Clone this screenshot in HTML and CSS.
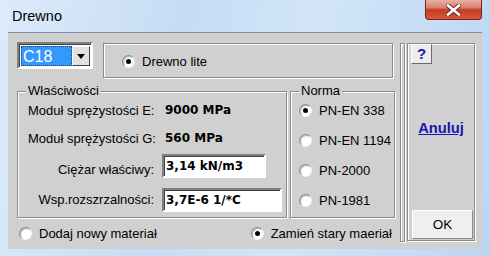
FILE: index.html
```html
<!DOCTYPE html>
<html lang="pl">
<head>
  <meta charset="UTF-8">
  <title>Drewno</title>
  <link rel="stylesheet" href="styles.css">
</head>
<body>

<div class="window">
  <div class="titlebar">
    <span class="title">Drewno</span>
    <div class="close">
      <svg width="15" height="12" viewBox="0 0 15 12">
        <path d="M2 1.5 L13 10.5 M13 1.5 L2 10.5" stroke="#6b1f14" stroke-width="4.4" stroke-linecap="square"/>
        <path d="M2 1.5 L13 10.5 M13 1.5 L2 10.5" stroke="#fff" stroke-width="2.6" stroke-linecap="square"/>
      </svg>
    </div>
  </div>

  <div class="client">
    <div class="main">
      <div class="top-row">
        <div class="combo">
          <div class="combo-value">C18</div>
          <div class="combo-btn"><span class="arrow"></span></div>
        </div>
        <div class="etched type-box">
          <label class="option"><span class="radio on"></span>Drewno lite</label>
        </div>
      </div>

      <div class="groups">
        <div class="etched group props">
          <span class="legend">Właściwości</span>
          <div class="prop-grid">
            <span class="prop-label">Moduł sprężystości E:</span>
            <span class="prop-value">9000 MPa</span>
            <span class="prop-label">Moduł sprężystości G:</span>
            <span class="prop-value">560 MPa</span>
            <span class="prop-label right">Ciężar właściwy:</span>
            <div class="field short">3,14 kN/m3</div>
            <span class="prop-label right">Wsp.rozszrzalności:</span>
            <div class="field long">3,7E-6 1/*C</div>
          </div>
        </div>

        <div class="etched group norma">
          <span class="legend">Norma</span>
          <label class="option"><span class="radio on"></span>PN-EN 338</label>
          <label class="option"><span class="radio"></span>PN-EN 1194</label>
          <label class="option"><span class="radio"></span>PN-2000</label>
          <label class="option"><span class="radio"></span>PN-1981</label>
        </div>
      </div>

      <div class="bottom-row">
        <label class="option"><span class="radio"></span>Dodaj nowy materiał</label>
        <label class="option replace"><span class="radio on"></span>Zamień stary maeriał</label>
      </div>
    </div>

    <div class="etched separator"></div>

    <div class="etched side">
      <div class="help-btn">?</div>
      <a class="cancel" href="#">Anuluj</a>
      <div class="ok-btn">OK</div>
    </div>
  </div>
</div>

</body>
</html>
```

FILE: styles.css
```css
body {
  margin: 0;
  padding: 0;
  font-family: 'Liberation Sans', Arial, sans-serif;
  font-size: 13px;
  color: #000;
}

.window {
  width: 490px;
  height: 256px;
  display: flex;
  flex-direction: column;
  background: linear-gradient(100deg, #dcebfa 0, #c6dcf4 35%, #d2e5f9 60%, #bcd6f1 100%);
  overflow: hidden;
}

.titlebar {
  height: 32px;
  display: flex;
  align-items: flex-start;
  padding: 0 8px 0 12px;
  flex: none;
}

.title {
  font-size: 14.5px;
  line-height: 32px;
}

.close {
  margin-left: auto;
  width: 57px;
  height: 20px;
  box-sizing: border-box;
  border: 1px solid #7a2216;
  border-top: none;
  border-radius: 0 0 4px 4px;
  background: linear-gradient(#eab0a4, #d98070 40%, #c63c22 52%, #d45a3c 100%);
  display: flex;
  align-items: center;
  justify-content: center;
}

.client {
  flex: 1;
  margin: 0 8px 7px;
  background: #d0d0d0;
  border-top: 1px solid #7d8ea3;
  display: flex;
  align-items: flex-start;
  padding: 9px 7px 0 9px;
}

/* etched (3D) frame like the old Win32 group boxes */
.etched {
  box-sizing: border-box;
  border: 1px solid #8a8a8a;
  box-shadow: inset 1px 1px #fff, 1px 1px #fff;
}

.main {
  width: 378px;
  display: flex;
  flex-direction: column;
}

.top-row {
  display: flex;
  align-items: flex-start;
  height: 36px;
}

.combo {
  width: 76px;
  height: 27px;
  box-sizing: border-box;
  border: 2px solid;
  border-color: #808080 #fff #fff #808080;
  box-shadow: inset 1px 1px #404040;
  background: #fff;
  display: flex;
  padding: 2px 1px 1px 2px;
}

.combo-value {
  flex: 1;
  background: #3399ff;
  color: #fff;
  font-size: 16px;
  line-height: 19px;
  padding-left: 1px;
  border: 1px dotted #1b3a66;
}

.combo-btn {
  width: 18px;
  box-sizing: border-box;
  border: 1px solid;
  border-color: #fff #404040 #404040 #fff;
  background: #e2e2e2;
  display: flex;
  align-items: center;
  justify-content: center;
}

.arrow {
  width: 0;
  height: 0;
  border-left: 4px solid transparent;
  border-right: 4px solid transparent;
  border-top: 5px solid #000;
}

.type-box {
  width: 290px;
  height: 35px;
  margin: 1px 0 0 10px;
  display: flex;
  align-items: center;
  padding: 2px 0 0 18px;
}

.option {
  display: flex;
  align-items: center;
  gap: 7px;
  white-space: nowrap;
}

.radio {
  width: 13px;
  height: 13px;
  box-sizing: border-box;
  border-radius: 50%;
  background: #fff;
  border: 1px solid;
  border-color: #8c8c8c #f4f4f4 #f4f4f4 #8c8c8c;
  box-shadow: inset 1px 1px 1px rgba(0, 0, 0, 0.3);
  display: flex;
  align-items: center;
  justify-content: center;
  flex: none;
}

.radio.on::after {
  content: '';
  width: 5px;
  height: 5px;
  border-radius: 50%;
  background: #000;
}

.groups {
  display: flex;
  margin-top: 13px;
  gap: 3px;
}

.group {
  position: relative;
  height: 127px;
}

.legend {
  position: absolute;
  top: -9px;
  left: 8px;
  padding: 0 2px;
  background: #d0d0d0;
  line-height: 16px;
}

.props {
  width: 270px;
  padding: 7px 0 0 10px;
}

.prop-grid {
  display: grid;
  grid-template-columns: 126px auto;
  grid-template-rows: 22px 22px 24px 24px;
  row-gap: 6px;
  column-gap: 8px;
  align-items: center;
}

.prop-grid .field.short {
  margin-top: -2px;
}

.prop-grid .field.long {
  margin-top: 5px;
}

.prop-label {
  white-space: nowrap;
  padding-top: 1px;
}

.prop-label.right {
  text-align: right;
  padding-top: 4px;
}

.prop-value,
.field {
  font-family: 'DejaVu Sans', sans-serif;
  font-weight: bold;
  font-size: 12px;
  white-space: nowrap;
}

.prop-value {
  padding-left: 3px;
}

.field {
  height: 24px;
  box-sizing: border-box;
  border: 2px solid;
  border-color: #808080 #fff #fff #808080;
  box-shadow: inset 1px 1px #404040;
  background: #fff;
  padding: 0 0 0 2px;
  line-height: 20px;
}

.field.short {
  width: 104px;
}

.field.long {
  width: 120px;
}

.norma {
  width: 105px;
  padding: 3px 0 0 8px;
  display: flex;
  flex-direction: column;
}

.norma .option {
  height: 30px;
}

.bottom-row {
  display: flex;
  align-items: center;
  height: 22px;
  margin-top: 4px;
  padding: 0 3px 0 2px;
}

.replace {
  margin-left: auto;
}

.separator {
  width: 5px;
  height: 199px;
  margin: 1px 0 0 5px;
}

.side {
  width: 68px;
  height: 198px;
  margin: 1px 0 0 2px;
  display: flex;
  flex-direction: column;
  align-items: flex-start;
}

.help-btn {
  width: 21px;
  height: 20px;
  margin-left: 3px;
  box-sizing: border-box;
  border: 1px solid;
  border-color: #fff #6a6a6a #6a6a6a #fff;
  background: #ececec;
  color: #1a1aa8;
  font-weight: bold;
  font-size: 15px;
  line-height: 18px;
  text-align: center;
}

.cancel {
  align-self: center;
  margin-top: 55px;
  color: #1616b4;
  font-weight: bold;
  font-size: 14.7px;
  line-height: 18px;
}

.ok-btn {
  margin: auto 0 1px 4px;
  width: 61px;
  height: 29px;
  box-sizing: border-box;
  border: 1px solid;
  border-color: #fff #8a8a8a #8a8a8a #fff;
  background: #efefef;
  display: flex;
  align-items: center;
  justify-content: center;
  font-size: 13.5px;
}
```
